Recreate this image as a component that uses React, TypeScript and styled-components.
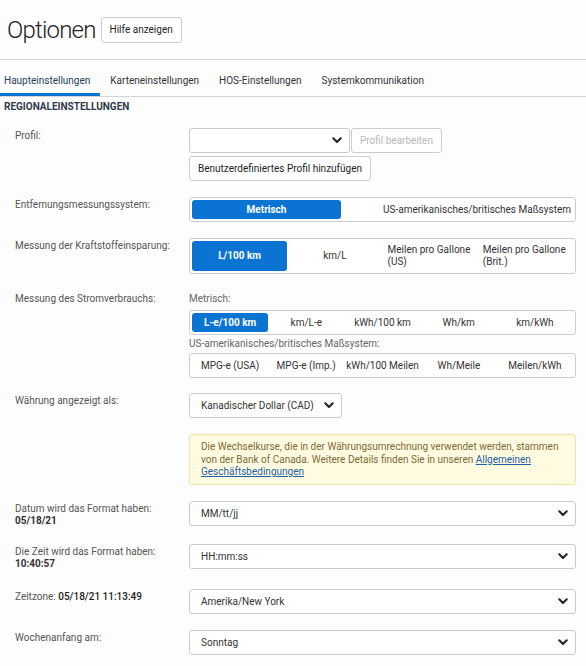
import * as React from 'react';
import styled, { createGlobalStyle } from 'styled-components';

const GlobalStyle = createGlobalStyle`
    body {
        margin: 0;
        background: #fdfdfd;
        font-family: Roboto, "Noto Sans", Arial, sans-serif;
        font-size: 10px;
        color: #333;
    }
    * {
        box-sizing: border-box;
    }
`;

const Header = styled.div`
    height: 60px;
    display: flex;
    align-items: center;
    gap: 5px;
    padding: 0 7px;
    border-bottom: 1px solid #d3d6da;
`;

const Title = styled.h1`
    margin: 0;
    font-size: 24px;
    font-weight: 300;
    letter-spacing: -0.8px;
    color: #222;
`;

const Button = styled.button<{ $height?: number }>`
    height: ${(p) => p.$height ?? 26}px;
    padding: 0 8px;
    border: 1px solid #cbcdd0;
    border-radius: 3px;
    background: #fff;
    font-family: inherit;
    font-size: 10px;
    font-weight: 400;
    color: ${(p) => (p.disabled ? '#b9b9b9' : '#1e1e1e')};
    cursor: pointer;
`;

const Tabs = styled.div`
    display: flex;
    gap: 6px;
    height: 37px;
    border-bottom: 1px solid #d3d6da;
`;

const Tab = styled.div<{ $active?: boolean }>`
    display: flex;
    align-items: center;
    padding: 8px 10px 0 4px;
    border-bottom: 3px solid ${(p) => (p.$active ? '#0b74d2' : 'transparent')};
    color: ${(p) => (p.$active ? '#1e3d5c' : '#333')};
    white-space: nowrap;
`;

const SectionTitle = styled.div`
    padding: 4px 4px 0;
    font-weight: 700;
    line-height: 12px;
    color: #2d3b4c;
`;

const Form = styled.div`
    display: flex;
    flex-direction: column;
    gap: 16px;
    padding: 15px 10px 0 15px;
`;

const Row = styled.div<{ $top?: number }>`
    display: grid;
    grid-template-columns: 174px 1fr;
    margin-top: ${(p) => p.$top ?? 0}px;
`;

const Label = styled.div`
    padding-top: 2px;
    line-height: 12.5px;
    color: #555;
`;

const Value = styled.div`
    font-weight: 700;
    color: #333;
`;

const Stamp = styled.span`
    font-weight: 500;
    color: #222;
`;

const Field = styled.div`
    display: flex;
    flex-direction: column;
    align-items: flex-start;
    gap: 3px;
`;

const Inline = styled.div`
    display: flex;
    gap: 1px;
`;

const SubLabel = styled.div<{ $after?: number }>`
    line-height: 12px;
    color: #666;
    margin-bottom: ${(p) => p.$after ?? 0}px;
`;

const Segmented = styled.div<{ $height: number }>`
    align-self: stretch;
    display: flex;
    height: ${(p) => p.$height}px;
    padding: 2px;
    border: 1px solid #cbcdd0;
    border-radius: 3px;
    background: #fff;
`;

const Segment = styled.div<{ $active?: boolean; $fit?: boolean; $basis?: number; $end?: boolean }>`
    flex: ${(p) => (p.$basis ? `0 0 ${p.$basis}px` : '1 1 0')};
    display: flex;
    align-items: center;
    justify-content: ${(p) => (p.$end ? 'flex-end' : 'center')};
    padding: 0 ${(p) => (p.$fit ? 2 : 5)}px;
    border-radius: 3px;
    background: ${(p) => (p.$active ? '#0b74d2' : 'transparent')};
    color: ${(p) => (p.$active ? '#fff' : '#333')};
    font-weight: ${(p) => (p.$active ? 700 : 400)};
    line-height: 12px;
    white-space: ${(p) => (p.$fit ? 'nowrap' : 'normal')};
    text-align: left;
`;

const SelectBox = styled.div<{ $width?: number }>`
    display: flex;
    align-items: center;
    justify-content: space-between;
    width: ${(p) => (p.$width ? `${p.$width}px` : '100%')};
    height: 25px;
    padding: 0 7px 0 11px;
    border: 1px solid #c8cacd;
    border-radius: 3px;
    background: #fff;
    color: #333;
`;

const Notice = styled.div`
    align-self: stretch;
    padding: 6px 11px 5px;
    border: 1px solid #f2e3a3;
    border-radius: 3px;
    background: #fffbe0;
    color: #7d6a37;
    line-height: 12.5px;
`;

const NoticeLink = styled.a`
    color: #1d5fa8;
    text-decoration: underline;
`;

function Chevron(): JSX.Element {
    return (
        <svg width="10" height="7" viewBox="0 0 10 7">
            <path d="M1.3 1.3 L5 5 L8.7 1.3" fill="none" stroke="#2b2b2b" strokeWidth="2.2" strokeLinecap="round" strokeLinejoin="round" />
        </svg>
    );
}

function Select({ value, width }: { value?: string; width?: number }): JSX.Element {
    return (
        <SelectBox $width={width}>
            <span>{value}</span>
            <Chevron />
        </SelectBox>
    );
}

const tabs = ['Haupteinstellungen', 'Karteneinstellungen', 'HOS-Einstellungen', 'Systemkommunikation'];
const fuel = ['L/100 km', 'km/L', 'Meilen pro Gallone (US)', 'Meilen pro Gallone (Brit.)'];
const metricPower = ['L-e/100 km', 'km/L-e', 'kWh/100 km', 'Wh/km', 'km/kWh'];
const imperialPower = ['MPG-e (USA)', 'MPG-e (Imp.)', 'kWh/100 Meilen', 'Wh/Meile', 'Meilen/kWh'];

function App(): JSX.Element {
    return (
        <>
            <GlobalStyle />
            <Header>
                <Title>Optionen</Title>
                <Button>Hilfe anzeigen</Button>
            </Header>
            <Tabs>
                {tabs.map((t, i) => (
                    <Tab key={t} $active={i === 0}>
                        {t}
                    </Tab>
                ))}
            </Tabs>
            <SectionTitle>REGIONALEINSTELLUNGEN</SectionTitle>
            <Form>
                <Row>
                    <Label>Profil:</Label>
                    <Field>
                        <Inline>
                            <Select width={161} />
                            <Button disabled $height={25}>
                                Profil bearbeiten
                            </Button>
                        </Inline>
                        <Button $height={25}>Benutzerdefiniertes Profil hinzufügen</Button>
                    </Field>
                </Row>
                <Row>
                    <Label>Entfernungsmessungssystem:</Label>
                    <Segmented $height={25}>
                        <Segment $active $fit $basis={149}>
                            Metrisch
                        </Segment>
                        <Segment $fit $end>
                            US-amerikanisches/britisches Maßsystem
                        </Segment>
                    </Segmented>
                </Row>
                <Row>
                    <Label>Messung der Kraftstoffeinsparung:</Label>
                    <Segmented $height={36}>
                        {fuel.map((f, i) => (
                            <Segment key={f} $active={i === 0}>
                                {f}
                            </Segment>
                        ))}
                    </Segmented>
                </Row>
                <Row $top={3}>
                    <Label style={{ paddingTop: 0 }}>Messung des Stromverbrauchs:</Label>
                    <Field>
                        <SubLabel $after={2}>Metrisch:</SubLabel>
                        <Segmented $height={25}>
                            {metricPower.map((f, i) => (
                                <Segment key={f} $active={i === 0} $fit>
                                    {f}
                                </Segment>
                            ))}
                        </Segmented>
                        <SubLabel>US-amerikanisches/britisches Maßsystem:</SubLabel>
                        <Segmented $height={25}>
                            {imperialPower.map((f) => (
                                <Segment key={f} $fit>
                                    {f}
                                </Segment>
                            ))}
                        </Segmented>
                    </Field>
                </Row>
                <Row $top={-1}>
                    <Label>Währung angezeigt als:</Label>
                    <Select value="Kanadischer Dollar (CAD)" width={153} />
                </Row>
                <Row>
                    <div />
                    <Notice>
                        Die Wechselkurse, die in der Währungsumrechnung verwendet werden, stammen von der Bank of Canada.
                        Weitere Details finden Sie in unseren{' '}
                        <NoticeLink href="#">Allgemeinen Geschäftsbedingungen</NoticeLink>
                    </Notice>
                </Row>
                <Row>
                    <Label>
                        Datum wird das Format haben:
                        <Value>05/18/21</Value>
                    </Label>
                    <Select value="MM/tt/jj" />
                </Row>
                <Row>
                    <Label>
                        Die Zeit wird das Format haben:
                        <Value>10:40:57</Value>
                    </Label>
                    <Select value="HH:mm:ss" />
                </Row>
                <Row $top={2}>
                    <Label>
                        Zeitzone: <Stamp>05/18/21 11:13:49</Stamp>
                    </Label>
                    <Select value="Amerika/New York" />
                </Row>
                <Row>
                    <Label>Wochenanfang am:</Label>
                    <Select value="Sonntag" />
                </Row>
            </Form>
        </>
    );
}

export default App;
